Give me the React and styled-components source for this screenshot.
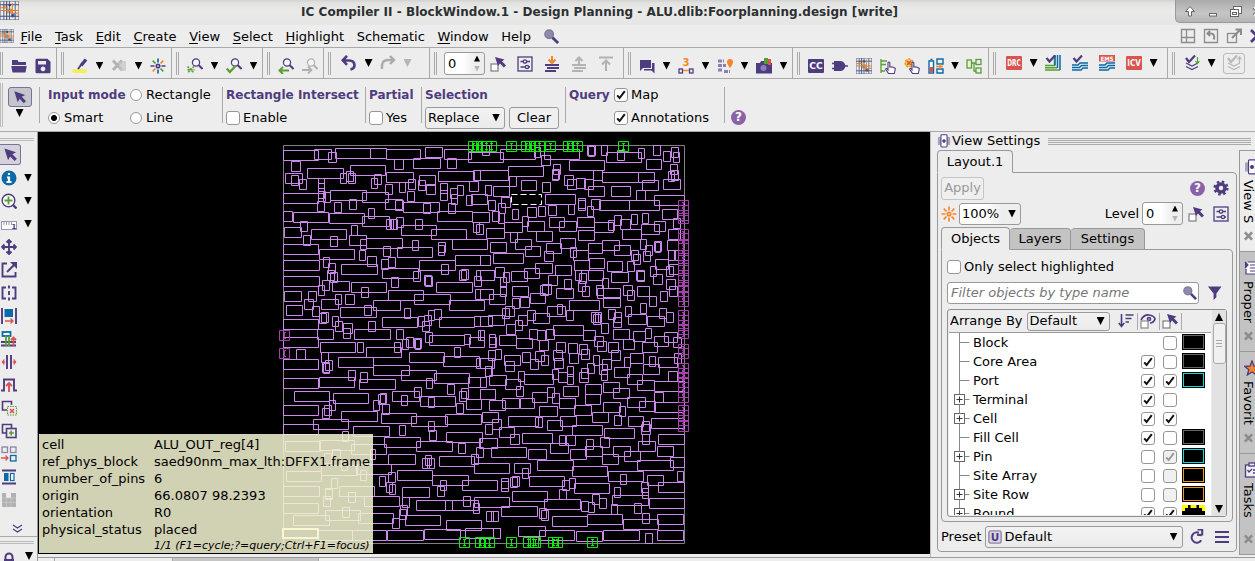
import React from "react";
import styled, { createGlobalStyle, css } from "styled-components";

const P = "#4f3c80";
const LINE = "#a9a9a9";
const GREEN = "#5a9e33";
const ORANGE = "#f5872b";
const BLUE = "#0a6aa8";
const RED = "#d9534f";

const Global = createGlobalStyle`
  * { box-sizing: border-box; }
  body { margin: 0; overflow: hidden; background: #ededed; font: 13px/16px "DejaVu Sans", sans-serif; color: #000; }
`;

/* ---------- window frame ---------- */
const Window = styled.div`
  width: 1255px; height: 561px; overflow: hidden; display: flex; flex-direction: column;
  background: #ededed; white-space: nowrap;
`;
const TitleBar = styled.header`
  flex: 0 0 25px; display: flex; align-items: flex-start;
  background: linear-gradient(#d2d2d0 0, #e2e2e0 3px, #eaeae8 10px, #e6e6e4 24px);
`;
const Title = styled.h1`
  margin: 0 277px 0 auto; font-size: 12px; line-height: 24px; font-weight: bold; color: #2b3033;
  width: 597px; letter-spacing: 0.04px;
`;
const TitleIcon = styled.div`flex: 0 0 20px; height: 22px; padding-top: 1px;`;
const WindowButtons = styled.div`
  flex: 0 0 80px; height: 23px; display: flex; gap: 7px; padding: 4px 0 0 6px; overflow: hidden;
  background: linear-gradient(#aaa, #c6c6c6 60%, #b4b4b4);
  border-left: 1px solid #999; border-bottom: 1px solid #999; border-bottom-left-radius: 5px;
  svg { flex: none; }
`;
const MenuBar = styled.nav`flex: 0 0 23px; display: flex; align-items: center; border-bottom: 1px solid ${LINE};`;
const MenuIcon = styled.div`width: 20.6px; height: 15px; svg { display: block; }`;
const MenuItem = styled.span`
  margin-right: 12.6px; line-height: 20px; padding-top: 1px;
  u { text-decoration-thickness: 1px; text-underline-offset: 2px; }
`;
const MenuRight = styled.div`
  margin-left: auto; overflow: hidden; display: flex; gap: 7px; flex: 0 0 75px;
  svg { flex: none; }
`;

/* ---------- toolbars ---------- */
const ToolBar = styled.div`flex: 0 0 31px; display: flex; border-bottom: 1px solid ${LINE}; overflow: hidden;`;
const ToolGroup = styled.div`
  flex: 0 0 ${(p) => p.$w}px; display: flex; align-items: center; gap: ${(p) => p.$gap}px;
  padding-left: ${(p) => p.$pad}px; padding-top: ${(p) => p.$drop}px; border-right: 1px solid ${LINE};
  background: linear-gradient(90deg, #aaa 1px, transparent 1px 2px, #aaa 2px 3px, transparent 3px) no-repeat ${(p) => (p.$first ? 0 : 4)}px 4px / 4px 23px;
  svg { flex: none; }
`;
const Caret = styled.i`
  flex: none; width: 8px; height: 8px; margin: 0 ${(p) => p.$m || 0}px; background: ${(p) => (p.$off ? "#b5b5b5" : "#000")};
  clip-path: ${(p) => (p.$up ? "polygon(50% 0, 100% 100%, 0 100%)" : "polygon(0 0, 100% 0, 50% 100%)")};
`;
const SpinBox = styled.span`
  flex: none; width: 41px; height: 23px; display: flex; align-items: center; justify-content: space-between;
  padding: 0 4px 0 3px; border: 1px solid #9a9a9a; border-radius: 3px; background: linear-gradient(90deg, #fff 45%, #eee 75%);
  margin-right: ${(p) => p.$mr || 0}px;
`;
const SpinArrows = styled.span`
  display: flex; flex-direction: column; gap: 4px;
  i { width: 6px; height: 6px; }
`;
const Framed = styled.span`
  flex: none; width: 22px; height: 21px; display: grid; place-items: center; border: 1px solid #bbb; border-radius: 3px;
`;

const ModeBar = styled.div`flex: 0 0 53px; display: flex; border-bottom: 1px solid ${LINE}; padding-top: 4px;
  background: linear-gradient(90deg, #bbb 1px, transparent 1px 2px, #bbb 2px 3px, transparent 3px) no-repeat 0 4px / 4px 44px;`;
const Pointer = styled.div`
  width: 39px; display: flex; flex-direction: column; align-items: center; gap: 2px; padding: 4px 0 0 0;
`;
const PressedButton = styled.div`
  width: 24px; height: 20px; display: grid; place-items: center; border: 1px solid #7a6fa0; border-radius: 3px; background: #c3c6cb;
`;
const Section = styled.div`
  flex: 0 0 ${(p) => p.$w}px; min-width: 0; display: grid; grid-template-columns: ${(p) => p.$cols || "auto"};
  grid-template-rows: 23px 23px; align-items: center; justify-content: start;
  padding-left: ${(p) => p.$pad || 3}px;
  background: linear-gradient(#aaa, #aaa) no-repeat 0 4px / 1px 36px;
`;
const Label = styled.b`color: ${P}; font-size: 12px;`;
const Choice = styled.label`display: flex; align-items: center; gap: ${(p) => p.$gap || 3}px;`;
const Box = styled.span`
  flex: none; width: 14px; height: 14px; display: grid; place-items: center; border: 1px solid #969696; border-radius: 3px;
  background: ${(p) => (p.$off ? "#f0f0f0" : "#fff")}; color: ${(p) => (p.$off ? "#999" : "#111")};
  svg { display: block; }
`;
const Radio = styled.span`
  width: 12px; height: 12px; border: 1px solid #999; border-radius: 50%;
  background: ${(p) => (p.$on ? "radial-gradient(#000 2.6px, #fff 3.4px)" : "#fff")};
`;
const Select = styled.span`
  flex: none; width: ${(p) => p.$w}px; height: ${(p) => p.$h || 22}px; display: flex; align-items: center; justify-content: space-between;
  padding: 0 4px 0 2px; border: 1px solid #9a9a9a; border-radius: 3px;
  background: ${(p) => (p.$white ? "linear-gradient(90deg, #fff 40%, #eee 70%)" : "linear-gradient(#f2f2f2, #ebebeb)")};
`;
const Button = styled.span`
  display: grid; place-items: center; width: ${(p) => p.$w}px; height: ${(p) => p.$h || 22}px;
  border: 1px solid ${(p) => (p.$off ? "#c4c4c4" : "#9a9a9a")}; border-radius: 3px; color: ${(p) => (p.$off ? "#999" : "#000")};
  background: #efefef;
`;
const Help = styled.span`
  display: block; flex: none; width: 15px; height: 15px; border-radius: 50%; background: #8b62a8; color: #fff;
  font-size: 12px; line-height: 15px; font-weight: bold; text-align: center;
`;
const HelpCell = styled.div`padding: 27px 0 0 7px; background: linear-gradient(#aaa, #aaa) no-repeat 0 4px / 1px 36px;`;

/* ---------- body ---------- */
const Body = styled.main`flex: 1; display: flex; min-height: 0;`;
const SideTools = styled.aside`
  flex: 0 0 38px; display: flex; flex-direction: column; padding-top: 11px; overflow: hidden;
  border-right: 1px solid #999;
  background: linear-gradient(#bbb 1px, transparent 1px 2px, #bbb 2px 3px, transparent 3px) no-repeat 0 6px / 34px 4px;
`;
const SideRow = styled.div`
  flex: 0 0 23px; display: flex; align-items: center; gap: 7px; padding-left: 1px;
  svg { flex: none; }
`;
const SidePressed = styled.div`
  width: 21px; height: 21px; margin-left: -1px; display: grid; place-items: center; border: 1px solid #7a6fa0; border-left: 0; border-radius: 0 3px 3px 0; background: #d5d3da;
`;
const More = styled.div`flex: 0 0 25px; padding: 13px 0 0 12px; svg { display: block; }`;
const LockRow = styled.div`
  flex: 0 0 30px; display: flex; gap: 8px; padding: 15px 0 0 1px; border-top: 1px solid #aaa;
  background: linear-gradient(#bbb 1px, transparent 1px 2px, #bbb 2px 3px, transparent 3px) no-repeat 0 4px / 34px 4px;
`;
const Center = styled.div`flex: 0 0 892px; display: flex; flex-direction: column;`;
const Canvas = styled.div`position: relative; flex: 0 0 422px; background: #000; svg { display: block; }`;
const BottomTabs = styled.div`
  flex: 1; display: flex; margin-top: 3px; border-top: 1px solid #999;
`;
const BottomTab = styled.div`flex: 0 0 ${(p) => p.$w}px; background: ${(p) => (p.$on ? "#c5c5c5" : "transparent")}; border-right: 1px solid #aaa;`;
const InfoTip = styled.dl`
  position: absolute; left: 1px; top: 302px; width: 334px; height: 119px; margin: 0; padding: 2px 3px;
  display: grid; grid-template-columns: 112px auto; grid-auto-rows: 17px; line-height: 17px;
  background: rgba(246, 246, 212, 0.85);
  dt, dd { margin: 0; }
`;
const TipHint = styled.dd`grid-column: 2; font-size: 11px; font-style: italic; line-height: 15px;`;

/* ---------- view settings dock ---------- */
const DockArea = styled.div`flex: 0 0 325px; height: 426px; display: flex; border-bottom: 1px solid #999; overflow: hidden;`;
const Dock = styled.section`
  flex: 0 0 309px; display: flex; flex-direction: column; padding-left: 6px; border-left: 1px solid #bbb;
`;
const DockHead = styled.div`flex: 0 0 18px; display: flex; align-items: center; gap: 1px; svg { flex: none; }`;
const Grip = styled.div`
  flex: 1; margin: 0 -12px 0 7px; height: 7px;
  background: repeating-linear-gradient(#aaa 0 1px, transparent 1px 2px);
`;
const TabRow = styled.div`display: flex; align-items: flex-end; margin-bottom: -1px; position: relative;`;
const Tab = styled.div`
  width: ${(p) => p.$w}px; height: ${(p) => (p.$on ? 23 : 22)}px; display: grid; place-items: center;
  border: 1px solid #999; border-bottom-color: ${(p) => (p.$on ? "#ededed" : "#999")};
  border-left-width: ${(p) => (p.$mid ? 0 : 1)}px;
  border-radius: 4px 4px 0 0; background: ${(p) => (p.$on ? "#ededed" : "#c3c3c3")};
`;
const Panel = styled.div`
  border: 1px solid #999; border-radius: 0 4px 4px 4px; display: flex; flex-direction: column;
  ${(p) => p.$outer && css`width: 300px; height: 380px; padding: 3px 3px 0 3px;`}
  ${(p) => p.$inner && css`width: 292px; height: 274px; padding: 6px 5px 0 5px;`}
`;
const Row = styled.div`
  flex: 0 0 ${(p) => p.$h}px; display: flex; align-items: center; gap: ${(p) => p.$gap || 0}px; padding-top: ${(p) => p.$drop || 0}px;
  svg { flex: none; }
`;
const Spacer = styled.span`flex: 1;`;
const Pad = styled.span`flex: 0 0 ${(p) => p.$w}px;`;
const Filter = styled.div`
  width: 252px; height: 22px; display: flex; align-items: center; justify-content: space-between;
  padding: 0 1px 0 3px; border: 1px solid #999; border-radius: 3px; background: #fff; color: #777; font-style: italic;
`;
const Tree = styled.div`
  width: 280px; height: 208px; margin-top: 5px; display: flex; border: 1px solid #8f8f8f; border-radius: 3px; overflow: hidden;
`;
const TreeMain = styled.div`flex: 1; display: flex; flex-direction: column; overflow: hidden; padding: 0 0 1px 1px;`;
const TreeHead = styled.div`
  flex: 0 0 23px; display: flex; align-items: center; padding-left: 1px; border-bottom: 1px solid #999;
  svg { flex: none; }
`;
const HeadCell = styled.span`flex: 0 0 22px; height: 17px; display: grid; place-items: center; border-right: 1px solid #aaa;`;
const TreeBody = styled.div`flex: 1; overflow: hidden; background: #fff;`;
const TreeRow = styled.div`display: flex; align-items: center; height: 19px; padding-left: 4px;`;
const Branch = styled.span`
  flex: 0 0 20px; height: 19px; svg { display: block; }
`;
const Name = styled.span`flex: 0 0 168px;`;
const CheckCell = styled.span`flex: 0 0 22px;`;
const Swatch = styled.span`
  flex: none; align-self: flex-start; width: 23px; height: 16px; margin: 1px 0 0 -3px; background: #000;
  ${(p) => (p.$dash
    ? css`border: 3px dashed ${p.$c};`
    : css`border: 1px solid #000; box-shadow: inset 0 0 0 1px ${p.$c};`)}
`;
const ScrollBar = styled.div`
  flex: 0 0 14px; display: flex; flex-direction: column; align-items: center; padding: 3px 0 3px; background: #e2e2e2;
  margin-left: 1px;
`;
const Thumb = styled.div`
  width: 13px; height: 41px; margin-top: 2px; margin-bottom: auto; border: 1px solid #aaa; border-radius: 3px; display: grid; place-items: center;
  background: #f0f0f0;
`;
const ThumbGrip = styled.i`width: 6px; height: 7px; background: repeating-linear-gradient(#aaa 0 1px, transparent 1px 3px);`;

const SideTabs = styled.aside`flex: 0 0 16px; display: flex; flex-direction: column; padding-top: 18px; height: 423px;`;
const SideTab = styled.div`
  flex: 0 0 ${(p) => p.$h}px; width: 24px; border: 1px solid #999; border-right: 0; background: ${(p) => (p.$on ? "#ededed" : "#c3c3c3")};
  display: flex; flex-direction: column; align-items: flex-start; padding: 8px 0 10px 4px; margin-bottom: -1px;
  > svg { flex: none; }
`;
const VText = styled.span`
  flex: 1; min-height: 0; writing-mode: vertical-rl; line-height: 15px; margin: 5px 0 0 -3px;
`;

/* ---------- icons ---------- */
const S = ({ w = 16, h = 16, vb, c = P, sw = 1.6, children }) => (
  <svg width={w} height={h} viewBox={vb || "0 0 16 16"} fill="none" stroke={c} strokeWidth={sw}>{children}</svg>
);
const AppLogo = ({ s }) => (
  <S w={s} h={s} vb="0 0 20 20" sw={1.1}>
    <rect x="0" y="0" width="20" height="20" fill="#f3ead8" stroke="#5d5f9c" />
    <rect x="3" y="3" width="5" height="5" fill="#e8c05a" stroke="none" />
    <rect x="7" y="8" width="6" height="5" fill="#f0a04a" stroke="none" />
    <rect x="12" y="13" width="4" height="4" fill="#7a9ad0" stroke="none" />
    <path d="M4 0v20M10 0v20M16 0v20" stroke="#3178a8" />
    <path d="M0 4h20M0 16h20M7 0v20" stroke="#4a4c90" />
    <path d="M0 10h20M13 2v16M0 7h8M11 13h9" stroke="#dd7a3a" />
    <rect x="9" y="3" width="2.5" height="2.5" fill="#3a3f86" stroke="none" />
    <rect x="12" y="14" width="2.5" height="2.5" fill="#3a3f86" stroke="none" />
  </S>
);
const Arrow = ({ s = 16, c = P }) => <S w={s} h={s}><path fill={c} stroke="none" d="M1.500 1.500 14 5.600 10 7.700 14.800 12.600 12.400 15 7.600 10 5.400 14Z" /></S>;
const Folder = () => <S><path fill={P} stroke="none" d="M1 2h5.500l1 2H15v3H1zM.3 8h15.400L14.500 14.500h-13z" /></S>;
const Save = () => <S><path fill={P} stroke="none" fillRule="evenodd" d="M.5 2Q.5.8 1.800.8h10.700l3 3V14q0 1.300-1.300 1.300H1.800Q.5 15.300.5 14zM3 3v3.500h8V3zM8 8.500a2.400 2.400 0 1 0 .01 0z" /></S>;
const Marker = () => <S><rect x="0" y="11" width="15" height="4" rx="2" fill="#f4ee5a" stroke="none" /><path d="M14 1.500 9 7.500" strokeWidth="3.400" /><path d="M9 7 6 11" strokeWidth="2" /></S>;
const Erase = () => <S c="#b3b3b3" sw={3}><path d="M2 2.500 11 12M11 2.500 2 12" /><path fill="#c4c4c4" stroke="none" d="M7 3h8v10H9z" opacity=".7" /></S>;
const Burst = ({ mono }) => (
  <S sw={1.700} c={mono ? ORANGE : P}>
    <path d="M8 .5v4M8 11.500v4" stroke={mono ? ORANGE : BLUE} /><path d="M.5 8h4M11.500 8h4" stroke={mono ? ORANGE : P} />
    <path d="m2.700 2.700 2.800 2.800M13.300 13.300l-2.800-2.800" stroke={mono ? ORANGE : GREEN} />
    <path d="m13.300 2.700-2.800 2.800M2.700 13.300l2.800-2.800" stroke={ORANGE} /><circle cx="8" cy="8" r="1.700" />
  </S>
);
const Lens = ({ kind, off }) => {
  const c = off ? "#b0b0b0" : P;
  const g = off ? "#b0b0b0" : GREEN;
  return (
    <S c={c} sw={1.200}>
      <circle cx="9" cy="4.500" r="3.600" fill="#f6f3fb" /><path d="m11.500 7 4 4" strokeWidth="2" />
      {kind === "fit" && <path stroke={g} strokeDasharray="2 1" strokeWidth="1.600" d="M.5 8.500 7 15M7 8.500.5 15M.5 11.700h7" />}
      {kind === "check" && <path stroke={g} strokeWidth="2.200" d="m.8 10.500 3 3.500L10 7.500" />}
      {kind === "back" && <path stroke={g} strokeWidth="2" d="M11 12.500H2M5 9l-3.500 3.500L5 16" />}
      {kind === "fwd" && <path stroke={g} strokeWidth="1.800" d="M0 12h9M6 8.500 9.500 12 6 15.500" />}
    </S>
  );
};
const Turn = ({ off }) => off
  ? <S c="#ababab" sw={2.400}><path d="M2 14Q1 5 8 5h5M10 1l4 4-4 4" /></S>
  : <S sw={2.600}><path d="M2 5.500h6q5.500 0 5.500 5 0 3-4 4M6 .8 1.800 5.300 6 9.800" /></S>;
const PickBox = () => <S><rect x="1" y="8" width="7" height="7" fill="#fff" stroke="#888" strokeWidth="1.300" /><path fill={P} stroke="none" d="M5 1l9.500 2.500-2.500 1.800L16 9.500 13.800 11.500 10 7.500 8 10z" /></S>;
const Sliders = () => <S sw={1.300}><rect x="1" y="1" width="14" height="14" /><path d="M3.500 5.500h3M10 5.500h3M3.500 11h5M11.500 11h1.500" /><circle cx="8" cy="5.500" r="1.700" /><circle cx="10" cy="11" r="1.600" /></S>;
const Stack = ({ kind }) => {
  const off = kind !== "down";
  const c = off ? "#b2b2b2" : P;
  if (kind === "top") return <S c={c} sw={2}><path d="M1 1.500h14M8 15V5M4 8.500 8 4.500l4 4" /></S>;
  return (
    <S c={c} sw={2}><path d="M1 9h14M3 12h12M1 15h11" />
      {off ? <path d="M8 9V2M4.500 5 8 1.500 11.500 5" /> : <path stroke={ORANGE} d="M8 0v6M4.500 3.500 8 7l3.500-3.500" />}
    </S>
  );
};
const Chat = () => <S><path fill={P} stroke="none" d="M1 2h11v8H4l-3 3zM13 5h2.500v10.500L12.500 12.500H5V11h8z" /></S>;
const Txt = styled.text`font: bold ${(p) => p.$s}px "DejaVu Sans", sans-serif; stroke: none; fill: ${(p) => p.$c}; text-anchor: middle;`;
const Three = () => <S sw={1.300}><Txt x="8" y="8" $s={10} $c={ORANGE}>3</Txt><rect x="1" y="11" width="3.500" height="4" /><rect x="11.500" y="11" width="3.500" height="4" /><path stroke={ORANGE} d="M5 12.500h6" /></S>;
const PinList = () => <S><path stroke="#8d80b0" strokeWidth="3" strokeDasharray="4 1" d="M1 3h6M1 7.500h8M1 12h5M7 13.500h6" /><path fill={ORANGE} stroke="none" d="M13 1a3 3 0 0 1 3 3q0 2-3 6-3-4-3-6a3 3 0 0 1 3-3z" /></S>;
const Camera = () => <S><path fill={P} stroke="none" d="M0 5h4l1-2h5l1 2h5v10.500H0z" /><circle cx="7.500" cy="10" r="3" fill="#8c7fb8" stroke="none" /><path fill={GREEN} stroke="none" d="M8 0h4v6H8z" /><path fill={RED} stroke="none" d="M12 1h3v6h-3z" /></S>;
const Badge = ({ t, c = RED, s = 8.500 }) => <S><rect x="0" y="1" width="16" height="14" rx="1" fill={c} stroke="none" /><Txt x="8" y="11.200" $s={s} $c="#fff" textLength="13.500" lengthAdjust="spacingAndGlyphs">{t}</Txt></S>;
const Gate = () => <S><path fill={P} stroke="none" d="M2 3h6q4.500 0 5.500 5-1 5-5.500 5H2z" /><path d="M0 5.500h3M0 10.500h3M12 8h4" /></S>;
const Hand = ({ bad }) => (
  <S sw={1.300}>
    {bad ? <g><circle cx="5" cy="5" r="4" fill="#f3cf3e" stroke={ORANGE} strokeDasharray="2 1.500" /><path stroke={RED} strokeWidth="1.600" d="M3 3l4 4M7 3 3 7" /></g>
      : <path stroke={GREEN} d="M1 1v14M1 3h6M1 6.500h5M1 13h4" />}
    <path fill="#fff" d="M8.500 15.500 5.500 11q1-1.200 2.500.8V4.500q1-1 1.800 0V9q3-.5 5.500 1.500l-1 5z" strokeWidth="1.100" />
  </S>
);
const Battery = () => <S sw={1.400} c={BLUE}><path d="M1 3h4.500v12H1z" fill="#fff" /><rect x="1.500" y="9" width="3.500" height="5.500" fill={RED} stroke="none" /><path d="M2.500 1.500h2M9 1h6v5H9zM9 11h6v4H9z" /><path stroke={ORANGE} d="M8 8.500h7M12 6v5" /></S>;
const Nodes = () => <S c={GREEN} sw={1.300}><rect x="1" y="2" width="4.500" height="8" /><rect x="10" y="1.500" width="5" height="5" /><rect x="10" y="10" width="5" height="5" /><path d="M6 5h4M8 5v8h2" /></S>;
const CheckLines = ({ kind }) => (
  <S sw={1.500}>
    {kind === "a" ? <g><path stroke={GREEN} d="M0 10.500h9.500V0M0 12.800h12M0 15h15" /><path stroke={BLUE} d="M10 10.500V0M12.500 13V0M15 15V0" /></g>
      : <path stroke={BLUE} d="M0 10h6l2-2h8M0 12.500h7.500l2-2H16M0 15h9l2-2h5" />}
    {kind === "ems" ? <g><rect x="0" y="0" width="16" height="6.500" fill={RED} stroke="none" /><Txt x="8" y="5.800" $s={6} $c="#fff" textLength="13" lengthAdjust="spacingAndGlyphs">EMS</Txt></g>
      : <path strokeWidth="2.200" d="m1.500 3 3 3.500L10 .5" />}
  </S>
);
const Layers3 = ({ off }) => {
  const c = off ? "#b8b8b8" : P;
  return <S c={c} sw={1.200}><path d="m2 8 6 3 6-3M2 11.500l6 3 6-3" /><path d="m2 3 3 4L11 .5" strokeWidth="2.200" /><path stroke={off ? c : GREEN} d={off ? "M13.500 8.500V2M11.500 4.500l2-2.500 2 2.500" : "M13.500 2v6M11.500 6l2 2.500 2-2.500"} /></S>;
};
const Search = ({ s = 16 }) => <S w={s} h={s}><circle cx="5.500" cy="5.500" r="4.500" fill="#918aaa" stroke="#837b9c" /><path d="m9 9 6 6" strokeWidth="3" /></S>;
const Gear = () => <S><circle cx="8" cy="8" r="6.200" strokeWidth="2.800" strokeDasharray="2.435 2.435" /><circle cx="8" cy="8" r="4" strokeWidth="3.500" /></S>;
const ViewIcon = ({ w = 16 }) => <S w={w} sw={1.200}><rect x="1" y="3.500" width="14" height="9" fill="#a9a4bd" stroke="none" /><rect x="4.500" y=".8" width="7" height="14" rx="1" fill="#fff" /><circle cx="8" cy="8" r="1.400" fill={P} /></S>;
const Funnel = () => <S w={15}><path fill={P} stroke="none" d="M1 1h14.500L10 8.500v4L7 15.500v-7z" /></S>;
const Sort = () => <S sw={1.600}><path d="M3.500 1v12M.8 10l2.700 3.500L6.200 10M7.500 2h8M7.500 5.500h6M7.500 9h3.500" /></S>;
const EyeBox = () => <S sw={1.700}><path d="M1 7Q4 1.500 9 2q5 .5 6 4-1.500 4-5 4" /><circle cx="9" cy="6" r="1.500" /><rect x="1" y="8" width="7" height="7" fill="#fff" stroke="#888" strokeWidth="1.200" /></S>;
const Reload = () => <S w={15} sw={2.200}><path d="M12 11.500A5.500 5.500 0 1 1 9.500 3.500M8 0h5v6.500M12.500 6 7.500 5.500" /></S>;
const Burger = () => <S><path strokeWidth="2" d="M1 3h14M1 8h14M1 13h14" /></S>;
const PresetIcon = () => <S w={14} h={14}><rect x="1" y="1" width="14" height="14" rx="2" fill="#d9d3e6" stroke="#8d86a5" /><Txt x="8" y="13" $s={12} $c={P}>U</Txt></S>;
const Close = () => <S w={9} h={10} vb="0 0 10 10" c="#8c8c8c" sw={2.800}><path d="m1 1 8 8M9 1 1 9" /></S>;
const Info = () => <S><circle cx="8" cy="8" r="7.500" fill={BLUE} stroke="none" /><path stroke="#fff" strokeWidth="2.200" d="M8 3v2M6 7.500h2V12M5.500 12h5" /></S>;
const ZoomIn = () => <S><circle cx="7.500" cy="7.500" r="6.300" fill="#fff" strokeWidth="1.400" /><path stroke={GREEN} strokeWidth="1.800" d="M3.500 7.500h8M7.500 3.500v8" /><path d="m12 12 3.500 3.500" strokeWidth="2.400" /></S>;
const Ruler = () => <S c="#9a93b5" sw={1}><rect x=".5" y="5.500" width="15" height="8" fill="#fff" /><path d="M3 6v3M5.500 6v3M8 6v3M10.500 6v3" /><Txt x="13" y="13" $s={7} $c={P}>1</Txt></S>;
const Move = () => <S sw={1.900}><path d="M8 1v14M1 8h14M5.500 3.500 8 1l2.500 2.500M5.500 12.500 8 15l2.500-2.500M3.500 5.500 1 8l2.500 2.500M12.500 5.500 15 8l-2.500 2.500" /></S>;
const Resize = () => <S sw={1.900}><path d="M6 1.500H1.500v13h13V10M6 10l7.500-7.500" /><path fill={P} stroke="none" d="M9 0h7v7z" /></S>;
const Flip = () => <S sw={1.900}><path d="M5 2.500H1.500v11H5M11 2.500h3.500v11H11" /><path d="M8 .5v3M8 6v4M8 12.500v3" /></S>;
const AlignR = () => <S sw={1.900}><path d="M1 0v16M15 0v16" /><rect x="3.500" y="1" width="8.500" height="8" fill={BLUE} stroke="none" /><path stroke={RED} strokeWidth="1.400" d="M4 13h8M9.500 10.500 12 13l-2.500 2.500" /></S>;
const Place = () => <S sw={1.800}><path d="M0 11h15M0 14.500h15" /><rect x="1.500" y="1" width="8" height="4" fill="#fff" stroke={BLUE} /><path stroke={GREEN} d="M5 5v10M8 5v10" /><path stroke={RED} d="M12.500 15V7M10 9l2.500-2.500L15 9" /></S>;
const Split = () => <S sw={1.900}><path d="M6 1v14M10 1v14" /><path fill={RED} stroke={RED} strokeWidth=".8" d="M4.500 8H1l2-2.500v5L1 8M11.500 8H15l-2-2.500v5L15 8" /></S>;
const Pulse = () => <S sw={1.900}><path d="M0 13.500h3V2.500h10v11h3" /><path stroke={RED} d="M8 15V6M5 9l3-3 3 3" /></S>;
const CopyX = () => <S sw={1.600}><path d="M6 10H1.500V1.500h9V5" /><rect x="6.500" y="6.500" width="9" height="8.500" stroke={GREEN} strokeDasharray="1.500 1" strokeWidth="1.200" /><path stroke={RED} d="m9 9 4 4M13 9l-4 4" /></S>;
const CopyPlus = () => <S sw={1.600}><path d="M5 10H1.500V1.500h9V5" /><rect x="5.500" y="5.500" width="9.500" height="9" /><path stroke={GREEN} d="M8 10h5M10.200 7.500v5" /></S>;
const Boxes = () => <S sw={1.300} c="#8b84a8"><rect x="1" y="1" width="5.500" height="5.500" /><rect x="9.500" y="1" width="5.500" height="5.500" /><rect x="9.500" y="9.500" width="5.500" height="5.500" stroke={BLUE} /><path stroke={RED} d="M0 12h7M4.500 9.500 7 12l-2.500 2.500" /></S>;
const Distribute = () => <S sw={1.800}><path d="M1 1.500h14M1 14.500h14" /><rect x="3" y="4" width="4.500" height="8" fill={BLUE} stroke="none" /><rect x="9.500" y="4.500" width="3.500" height="7" fill="#fff" stroke={BLUE} strokeWidth="1.200" /></S>;
const Mosaic = () => <S><path fill="#b2b2b2" stroke="none" d="M1 1h4v5h5V1h5v14H1z" /><path stroke="#ccc" strokeWidth=".6" d="M1 6h14M1 10.500h14M5.500 5v10M10 5v10" /></S>;
const Chevrons = () => <S w={11} h={9} vb="0 0 11 9" sw={1.300}><path d="m1 1 4.500 3L10 1M1 5l4.500 3L10 5" /></S>;
const Lock = () => <S h={14} vb="0 0 16 14"><path strokeWidth="2" d="M4.500 8V5a3.500 3.500 0 0 1 7 0v3" /><rect x="3" y="7" width="10" height="7" fill={P} stroke="none" /></S>;
const Doc = () => <S sw={1.200}><path fill="#fff" d="M4 2h11v12H2V9" /><path d="M6 5h7M6 8h7M6 11h7" /><path fill={P} d="M1 2l3 3-3 3" /></S>;
const Star = () => <S sw={1.300}><path fill={ORANGE} d="m8 1 2 5 5.500.3-4.300 3.400 1.500 5.300L8 12l-4.700 3 1.500-5.300L.5 6.300 6 6z" /></S>;
const Clip = () => <S sw={1.300}><rect x="1.500" y="3" width="13" height="12" fill="#eee" /><rect x="5" y="1" width="6" height="3" fill="#eee" /><path d="m3.500 8 1.500 2 3-3M9 8h5M9 11h5" /></S>;
const Tick = () => <S w={12} h={12} vb="0 0 12 12" c="currentColor" sw={2}><path d="M2.200 6.300 4.600 9 9.800 2.200" /></S>;

/* ---------- floorplan ---------- */
// Each tile has a pixel origin and a list of cells "left right top" in thirds of a pixel; a row is 10px tall.
const TILES = [
  { ox: 270, oy: 130, cells: "40 145 61,134 184 58,176 199 67,197 301 55,301 349 55,349 451 58,466 518 52,524 605 58,596 700 67,65 91 94,374 400 88,431 512 85,532 559 85,242 347 106,113 220 115,47 97 130,65 86 136,88 109 148,146 163 146,146 163 160,146 163 175,212 229 130,230 250 124,235 256 130,313 334 133,304 322 145,349 431 127,416 436 148,449 496 136,446 467 151,470 496 163,388 406 157,347 367 163,506 613 124,611 715 121,599 625 154,562 580 166,512 532 160,512 532 181,541 562 175,544 562 193,647 664 166,40 145 190,145 166 184,160 181 187,143 163 214,181 289 181,278 355 187,412 434 184,347 397 208,377 400 211,194 214 217,239 259 208,400 508 217,461 481 220,536 556 220,589 607 196,605 653 193,40 67 244,70 175 247,178 283 250,296 313 235,278 358 259,380 400 262,350 370 268,361 382 268,364 379 268,437 458 268,395 500 286,502 607 244,607 657 247,611 628 277,619 640 283,43 94 292,91 112 274,101 121 316,124 229 298,181 202 319,244 262 286,239 289 316,272 289 328,289 397 325,485 589 298,548 653 328,427 445 331,40 145 343,148 253 358,268 287 361,292 319 379,341 361 349,382 488 352,506 526 337,506 523 346,40 148 391,160 178 382,176 196 400,214 322 403,334 355 388,356 377 382,337 446 415,449 556 391,514 536 403,556 660 376,431 451 424,173 193 421,181 202 427,40 148 439,145 163 466,157 178 451,187 238 454,244 349 457,364 385 442,464 485 436,467 488 439,500 607 457,568 589 421,575 595 418,613 634 439,619 673 421,43 94 484,116 139 484,196 214 493,226 253 493,274 295 472,355 461 481,433 541 493,616 670 478,103 130 508,154 205 508,127 148 529,310 391 511,538 643 511,49 97 526,211 319 532,283 304 526,404 421 535,476 494 541,494 514 538,464 484 556,446 464 559,337 443 562,509 613 562,613 667 559,148 169 550,154 175 547,40 145 568,187 205 559,196 217 574,220 247 580,220 241 595,295 316 574,457 478 574,143 190 598,40 145 622,253 361 598,379 400 598,467 487 607,478 583 616,583 601 613,598 643 622,625 643 601,410 431 622,397 416 628,433 454 625,436 451 628,151 256 637,262 280 637,289 395 652,374 392 637,553 571 652" },
  { ox: 480, oy: 130, cells: "7 28 46,62 167 58,163 182 52,184 211 76,193 298 58,322 347 46,325 344 48,364 382 46,412 434 61,380 484 67,475 494 55,520 541 46,500 545 88,550 571 64,573 595 52,580 598 67,571 592 103,565 583 124,574 595 121,550 601 148,0 85 121,85 190 109,88 109 139,124 169 151,187 211 157,217 238 118,220 241 103,217 235 121,268 373 91,253 280 136,262 289 148,289 316 145,313 340 148,340 368 121,368 475 127,475 523 127,487 535 151,16 34 166,40 88 169,325 373 169,394 451 169,470 496 181,523 613 196,25 46 211,64 91 202,196 286 193,295 316 205,295 316 211,334 361 208,358 448 211,448 538 211,37 58 244,55 76 220,97 115 238,142 169 232,176 196 229,205 229 226,265 283 223,322 340 229,547 592 238,55 73 250,127 145 259,73 127 277,142 193 274,208 253 262,238 289 274,292 343 262,344 401 277,385 403 271,403 424 256,421 451 268,454 472 253,487 505 250,484 538 283,523 556 274,580 601 265,565 601 298,19 73 295,91 112 307,106 154 328,169 217 304,136 181 349,295 343 301,427 484 298,31 79 337,241 286 325,199 244 340,271 289 352,193 220 364,325 368 340,368 418 331,403 451 346,481 499 328,523 544 334,526 541 337,496 517 346,490 511 364,454 475 361,460 481 373,562 595 331,280 325 361,40 130 370,0 31 376,329 373 385,283 329 391,382 427 394,442 463 394,526 565 388,565 583 361,586 613 361,166 217 400,226 274 406,46 73 412,0 43 421,70 88 427,94 142 424,133 178 415,205 232 436,253 274 448,286 304 421,298 319 430,325 370 421,367 385 445,394 445 427,469 493 421,472 494 424,511 529 409,520 547 433,559 580 409,559 586 448,568 595 403,61 79 442,0 40 478,61 79 470,97 145 469,151 196 490,182 205 466,187 214 463,229 280 475,295 316 454,307 328 469,349 370 466,353 370 475,370 421 475,430 457 466,442 463 481,472 508 469,508 529 499,541 562 484,568 592 469,97 118 505,28 76 493,121 148 502,268 358 511,370 421 502,385 406 538,67 88 535,76 103 529,115 142 556,142 166 541,160 208 550,202 256 529,232 247 523,259 280 541,334 355 547,340 361 553,346 364 547,363 385 580,403 424 547,400 425 562,436 454 529,445 500 553,481 499 520,502 553 559,538 559 535,559 580 547,0 37 559,25 73 556,79 106 583,106 127 571,148 172 598,172 196 601,199 223 598,220 310 586,310 346 601,58 109 616,109 157 625,28 46 613,28 46 622,0 13 601,343 370 619,400 448 598,460 496 604,496 514 595,553 592 607,580 604 622" },
  { ox: 270, oy: 340, cells: "80 106 28,155 175 37,40 145 58,157 178 67,160 178 70,167 187 61,205 310 52,310 418 76,419 523 37,520 628 49,619 673 55,395 499 91,494 598 100,235 256 91,271 292 97,40 145 115,148 253 112,268 376 118,470 487 115,433 454 142,532 553 133,596 650 112,646 664 79,73 178 154,190 295 160,310 328 181,326 347 163,331 349 160,338 358 193,368 448 154,394 412 166,451 556 169,475 493 172,568 589 154,575 595 145,589 634 178,631 676 148,559 580 190,178 196 181,40 145 196,157 178 205,164 185 196,214 322 214,334 439 220,425 532 229,527 634 223,130 235 238,40 145 253,217 236 274,250 358 259,475 494 244,388 406 256,478 500 271,529 637 277,628 682 295,343 451 292,440 547 304,565 586 310,619 640 322,355 436 343,458 478 355,466 484 346,473 493 355,508 613 349,604 625 343,613 718 370,47 152 304,148 253 301,245 350 313,187 210 328,300 316 328,162 185 340,214 232 361,259 365 373,154 262 376,49 154 394,271 290 391,184 203 415,40 148 439,208 313 439,166 187 445,166 187 448,160 181 469,236 257 457,283 388 469,40 145 490,217 239 502,166 271 511,70 178 526,265 370 520,145 247 571,247 350 571,352 461 571,464 571 568,382 487 391,487 595 406,328 347 409,356 376 397,349 368 427,358 376 433,397 478 442,397 418 472,502 523 439,511 529 421,577 682 421,439 547 481,527 625 481,580 601 469,610 628 490,406 511 526,368 388 535,388 410 508,392 412 496,529 634 541,586 690 566" },
  { ox: 480, oy: 340, cells: "28 49 -8,178 205 1,229 256 7,265 292 10,298 322 13,352 379 4,385 415 7,430 463 -2,487 532 7,523 565 -11,25 46 31,46 64 28,73 121 46,76 103 64,127 151 37,166 193 34,151 175 58,184 205 46,220 247 31,223 250 55,268 295 40,304 328 28,322 343 70,340 358 46,368 394 58,394 421 31,403 448 82,433 451 52,451 490 40,508 526 49,535 592 52,490 538 73,583 604 40,0 37 55,16 37 79,0 19 112,28 79 106,76 121 118,115 133 94,133 220 103,217 235 88,235 262 97,262 280 79,262 280 103,298 325 97,304 325 85,358 382 73,364 382 91,316 364 133,316 361 163,370 418 127,400 448 145,442 487 103,472 523 121,523 613 124,565 592 94,523 550 157,0 46 148,109 130 139,28 76 181,68 119 175,121 163 175,157 202 157,202 223 142,217 238 160,250 295 139,238 286 175,178 232 199,283 334 196,337 385 217,370 421 187,418 436 199,403 424 226,442 496 172,478 526 184,523 613 187,445 490 229,514 613 235,7 55 217,37 64 238,16 37 253,58 103 262,85 175 229,166 187 232,202 247 241,241 289 229,277 368 256,373 463 265,487 508 244,484 511 253,487 508 283,535 613 283,91 118 283,0 52 295,127 217 280,238 256 286,259 286 286,211 265 310,319 340 298,361 388 292,400 451 319,475 526 304,532 580 319,34 139 322,145 199 328,271 319 328,316 367 319,367 415 343,433 481 334,571 613 352,472 580 361,172 280 361,103 151 370,127 145 385,277 382 379,385 490 394,421 439 403,502 550 406,592 610 394,64 85 415,64 85 424,91 112 412,97 118 409,148 253 409,268 286 415,247 268 421,283 388 430,484 505 427,535 613 427,487 505 445,403 421 442,97 202 454,238 259 448,397 505 466,337 358 463,358 379 475,508 613 475,-16 88 472,64 172 499,193 301 478,304 325 484,325 343 487,178 199 505,184 205 511,19 40 514,34 55 514,217 322 529,322 427 523,430 535 538,394 412 493,463 484 490,487 508 520,532 610 523,40 61 565,115 196 559,178 283 571,289 368 574,370 478 571,496 517 580,532 610 571" },
];
const box = (x1, x2, y, h = 10) => `M${x1 + 0.5} ${y + 0.5}H${x2 + 0.5}v${h}H${x1 + 0.5}z`;
const cellPath = TILES.map(({ ox, oy, cells }) =>
  cells.split(",").map((c) => {
    const [a, b, y] = c.split(" ").map((n) => Math.floor(Number(n) / 3));
    return box(ox + a, ox + b, oy + y);
  }).join("")).join("");
const pin = (x, y) => box(x, x + 10, y) + `M${x + 4} ${y + 2.5}h3M${x + 5.5} ${y + 2}v6M${x + 4} ${y + 8.5}h3`;
const TOP = [468, 472, 476, 481, 486, 506, 521, 525, 529, 534, 545, 563, 567, 572, 618];
const BOTTOM = [459, 475, 479, 484, 506, 523, 528, 530, 548, 552, 587];
const RIGHT = [200, 205, 210, 213, 229, 233, 240, 243, 250, 255, 260, 263, 270, 275, 282, 286, 291, 296, 310, 315, 320, 324, 328, 344, 348, 363, 368, 372, 377, 382, 387, 392, 405, 410, 415, 421];
const Floorplan = () => (
  <svg width="892" height="422" viewBox="38 132 892 422" fill="none" strokeWidth="1">
    <path d={box(283, 684, 145, 398)} stroke="#808080" />
    <path d={cellPath} stroke="#cb89ec" />
    <path d={box(511, 541, 194)} stroke="#000" />
    <path d={box(511, 541, 194)} stroke="#fff" strokeDasharray="6 3" />
    <path d={RIGHT.map((y) => pin(678, y)).join("") + pin(279, 330) + pin(279, 348)} stroke="#a83fb0" />
    <path d={TOP.map((x) => pin(x, 141)).join("") + BOTTOM.map((x) => pin(x, 537)).join("")} stroke="#00f000" />
    <rect x="283" y="529" width="35" height="9" stroke="#ffffd8" strokeWidth="2" />
  </svg>
);

const MENU = [["", "F", "ile"], ["", "T", "ask"], ["", "E", "dit"], ["", "C", "reate"], ["", "V", "iew"], ["", "S", "elect"], ["", "H", "ighlight"], ["Sche", "m", "atic"], ["", "W", "indow"], ["Help", "", ""]];
const TIP = [["cell", "ALU_OUT_reg[4]"], ["ref_phys_block", "saed90nm_max_lth:DFFX1.frame"], ["number_of_pins", "6"], ["origin", "66.0807 98.2393"], ["orientation", "R0"], ["physical_status", "placed"]];
// name, expandable, visible, selectable ("-" none, "0" off, "1" on, "d"/"e" disabled off/on), swatch colour
const OBJECTS = [
  ["Block", 0, "-", "0", "#666"], ["Core Area", 0, "1", "0", "#666"], ["Port", 0, "1", "1", "#00dede"],
  ["Terminal", 1, "1", "0"], ["Cell", 1, "1", "1"], ["Fill Cell", 0, "1", "0", "#666"],
  ["Pin", 1, "0", "e", "#00dede"], ["Site Array", 0, "0", "d", "#f59a0a"], ["Site Row", 1, "0", "d", "#f59a0a"], ["Bound", 1, "1", "1", "#ff0"],
];
const Check = ({ v }) => v === "-" ? null : <Box $off={v === "d" || v === "e"}>{(v === "1" || v === "e") && <Tick />}</Box>;
const Spin = ({ mr }) => <SpinBox $mr={mr}>0<SpinArrows><Caret $up /><Caret $off /></SpinArrows></SpinBox>;

const Group = ({ w, gap = 7.5, pad = 15, drop = 5, first, children }) => (
  <ToolGroup $w={w} $gap={gap} $pad={pad} $drop={drop} $first={first}>{children}</ToolGroup>
);

export default function App() {
  return (
    <Window>
      <Global />
      <TitleBar>
        <TitleIcon><AppLogo s={19} /></TitleIcon>
        <Title>IC Compiler II - BlockWindow.1 - Design Planning - ALU.dlib:Foorplanning.design [write]</Title>
        <WindowButtons>
          <S><path fill="#fff" stroke="#666" strokeWidth="1" d="M8 2.500 12.500 7.500H9.500v4.500h-3V7.500H3.500z" /></S>
          <S c="#666" sw={1}><rect x="4.500" y="9.500" width="7" height="2.500" fill="#fff" /></S>
          <S c="#666" sw={1}><rect x="5.500" y="2.500" width="8" height="7" fill="#fff" /><rect x="2.500" y="5.500" width="8" height="7" fill="#fff" /><rect x="4.500" y="8.500" width="4" height="2" /></S>
          <S c="#fff" sw={2}><path stroke="#666" strokeWidth="4" d="m3 3 9 9M12 3l-9 9" /><path d="m3 3 9 9M12 3l-9 9" /></S>
        </WindowButtons>
      </TitleBar>
      <MenuBar>
        <MenuIcon><AppLogo s={14} /></MenuIcon>
        {MENU.map(([a, b, c]) => <MenuItem key={a + b + c}>{a}<u>{b}</u>{c}</MenuItem>)}
        <Search s={15} />
        <MenuRight>
          <S c="#8c8c8c" sw={1.300}><path d="M1.500 1.500h13v13h-13zM1.500 9.500h13M6.500 1.500v13" /></S>
          <S c="#8c8c8c" sw={1.300}><path d="M1.500 1.500h13v13h-13z" /><path strokeWidth="2" d="M4 5.500h4q4 0 3 6M7 3 4.500 5.500 7 8" /></S>
          <S c="#8c8c8c" sw={1.300}><rect x="1.500" y="5.500" width="9" height="9" /><path strokeWidth="2" d="M6 10l8-8M9.500 1.500H15V7" /></S>
          <S sw={2.800}><path d="m2 2 12 12M14 2 2 14" /></S>
        </MenuRight>
      </MenuBar>
      <ToolBar>
        <Group w={57} gap={8} pad={11} first><Folder /><Save /></Group>
        <Group w={115}><Marker /><Caret /><Erase /><Caret /><Burst /></Group>
        <Group w={91}><Lens kind="fit" /><Caret /><Lens kind="check" /><Caret /></Group>
        <Group w={61} gap={8}><Lens kind="back" /><Lens kind="fwd" off /></Group>
        <Group w={106} pad={17} drop={0}><Turn /><Caret /><Turn off /><Caret $off /></Group>
        <Group w={194} gap={11} pad={14} drop={1}><Spin mr={-6} /><PickBox /><Sliders /><Stack kind="down" /><Stack kind="up" /><Stack kind="top" /></Group>
        <Group w={169}><Chat /><Caret /><Three /><Caret /><PinList /><Caret /><Camera /><Caret /></Group>
        <Group w={196} gap={8}><Badge t="CC" c={P} s={9} /><Gate /><AppLogo s={16} /><Hand /><Hand bad /><Battery /><Caret $m={-1} /><Nodes /></Group>
        <Group w={179} gap={11} pad={17} drop={0}><Badge t="DRC" /><Caret $m={-3.500} /><CheckLines kind="a" /><CheckLines kind="b" /><CheckLines kind="ems" /><Badge t="ICV" /><Caret $m={-3.500} /></Group>
        <Group w={100} pad={16} drop={0}><Layers3 /><Caret /><Framed><Layers3 off /></Framed></Group>
      </ToolBar>
      <ModeBar>
        <Pointer><PressedButton><Arrow s={14} /></PressedButton><Caret /></Pointer>
        <Section $w={183} $pad={9} $cols="82px auto">
          <Label>Input mode</Label><Choice $gap={4}><Radio />Rectangle</Choice>
          <Choice $gap={4}><Radio $on />Smart</Choice><Choice $gap={4}><Radio />Line</Choice>
        </Section>
        <Section $w={143} $pad={4}><Label>Rectangle Intersect</Label><Choice><Box />Enable</Choice></Section>
        <Section $w={56} $pad={4}><Label>Partial</Label><Choice><Box />Yes</Choice></Section>
        <Section $w={144} $pad={4} $cols="84px auto">
          <Label>Selection</Label><span />
          <Select $w={80}>Replace<Caret /></Select><Button $w={50}>Clear</Button>
        </Section>
        <Section $w={159} $pad={4} $cols="45px auto">
          <Label>Query</Label><Choice><Box><Tick /></Box>Map</Choice>
          <span /><Choice><Box><Tick /></Box>Annotations</Choice>
        </Section>
        <HelpCell><Help>?</Help></HelpCell>
      </ModeBar>
      <Body>
        <SideTools>
          <SideRow><SidePressed><Arrow s={15} /></SidePressed></SideRow>
          <SideRow><Info /><Caret /></SideRow>
          <SideRow><ZoomIn /><Caret /></SideRow>
          <SideRow><Ruler /><Caret /></SideRow>
          {[Move, Resize, Flip, AlignR, Place, Split, Pulse, CopyX, CopyPlus, Boxes, Distribute, Mosaic].map((Icon, i) => <SideRow key={i}><Icon /></SideRow>)}
          <More><Chevrons /></More>
          <LockRow><Lock /><Caret /></LockRow>
        </SideTools>
        <Center>
          <Canvas>
            <Floorplan />
            <InfoTip>
              {TIP.map(([k, v]) => <React.Fragment key={k}><dt>{k}</dt><dd>{v}</dd></React.Fragment>)}
              <TipHint>1/1 (F1=cycle;?=query;Ctrl+F1=focus)</TipHint>
            </InfoTip>
          </Canvas>
          <BottomTabs><BottomTab $w={17} /><BottomTab $w={118} /><BottomTab $w={146} $on /></BottomTabs>
        </Center>
        <DockArea>
          <Dock>
            <DockHead><ViewIcon w={14} />View Settings<Grip /></DockHead>
            <TabRow><Tab $w={76} $on>Layout.1</Tab></TabRow>
            <Panel $outer>
              <Row $h={24}><Button $w={43} $h={23} $off>Apply</Button><Spacer /><Help>?</Help><Pad $w={8} /><Gear /><Pad $w={4} /></Row>
              <Row $h={27}><Burst mono /><Pad $w={2} /><Select $w={62} $white>100%<Caret /></Select><Spacer />Level<Pad $w={3} /><Spin /><Pad $w={5} /><PickBox /><Pad $w={9} /><Sliders /><Pad $w={4} /></Row>
              <TabRow><Tab $w={69} $on>Objects</Tab><Tab $w={61} $mid>Layers</Tab><Tab $w={74} $mid>Settings</Tab></TabRow>
              <Panel $inner>
                <Row $h={22}><Choice><Box />Only select highlighted</Choice></Row>
                <Row $h={26} $gap={8} $drop={4}><Filter>Filter objects by type name<Search s={14} /></Filter><Funnel /></Row>
                <Tree>
                  <TreeMain>
                    <TreeHead>Arrange By<Pad $w={4} /><Select $w={83} $h={19}>Default<Caret /></Select><Pad $w={6} /><HeadCell><Sort /></HeadCell><HeadCell><EyeBox /></HeadCell><HeadCell><PickBox /></HeadCell></TreeHead>
                    <TreeBody>
                      {OBJECTS.map(([name, exp, vis, sel, color]) => (
                        <TreeRow key={name}>
                          <Branch>
                            <svg width="20" height="19" fill="none" stroke="#888"><path d="M6.500 0v19M6.500 9.500h10" />
                              {exp ? <><rect x="1.500" y="4.500" width="10" height="10" fill="#fff" stroke="#666" /><path stroke="#333" d="M3.500 9.500h6M6.500 6.500v6" /></> : null}
                            </svg>
                          </Branch>
                          <Name>{name}</Name>
                          <CheckCell><Check v={vis} /></CheckCell><CheckCell><Check v={sel} /></CheckCell>
                          {color && <Swatch $c={color} $dash={color === "#ff0"} />}
                        </TreeRow>
                      ))}
                    </TreeBody>
                  </TreeMain>
                  <ScrollBar><Caret $up /><Thumb><ThumbGrip /></Thumb><Caret /></ScrollBar>
                </Tree>
              </Panel>
              <Row $h={29}>Preset<Pad $w={3} />
                <Select $w={198} $h={22}><Choice><PresetIcon />Default</Choice><Caret /></Select>
                <Pad $w={7} /><Reload /><Pad $w={9} /><Burger />
              </Row>
            </Panel>
          </Dock>
          <SideTabs>
            <SideTab $h={102} $on><ViewIcon /><VText>View S</VText><Close /></SideTab>
            <SideTab $h={101}><Doc /><VText>Proper</VText><Close /></SideTab>
            <SideTab $h={103}><Star /><VText>Favorit</VText><Close /></SideTab>
            <SideTab $h={102}><Clip /><VText>Tasks</VText><Close /></SideTab>
          </SideTabs>
        </DockArea>
      </Body>
    </Window>
  );
}
